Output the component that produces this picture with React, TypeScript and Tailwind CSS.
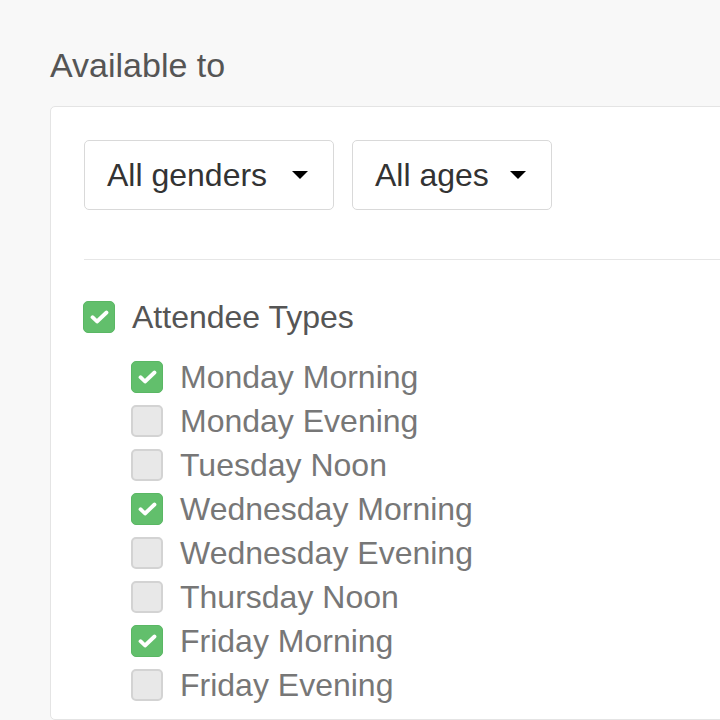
import { useState } from "react";

const slots = [
  { label: "Monday Morning", on: true },
  { label: "Monday Evening", on: false },
  { label: "Tuesday Noon", on: false },
  { label: "Wednesday Morning", on: true },
  { label: "Wednesday Evening", on: false },
  { label: "Thursday Noon", on: false },
  { label: "Friday Morning", on: true },
  { label: "Friday Evening", on: false },
];

function Box({ checked, onClick }: { checked: boolean; onClick: () => void }) {
  return (
    <button
      onClick={onClick}
      className={
        checked
          ? "w-[32px] h-[32px] shrink-0 rounded-[5px] bg-[#62bf6c] border border-[#5ab764] flex items-center justify-center"
          : "w-[32px] h-[32px] shrink-0 rounded-[5px] bg-[#e8e8e8] border-2 border-[#d3d3d3]"
      }
    >
      {checked && (
        <svg width="19" height="14" viewBox="0 0 19 14" fill="none">
          <path
            d="M2.5 7.2 L7 11.5 L16.5 2.5"
            stroke="#fff"
            strokeWidth="3.8"
            strokeLinecap="round"
            strokeLinejoin="round"
          />
        </svg>
      )}
    </button>
  );
}

function Select({ label, width }: { label: string; width: string }) {
  return (
    <div
      className={`${width} flex items-center justify-between h-[70px] pl-[22px] pr-[25px] bg-white border border-[#d9d9d9] rounded-[5px] text-[#333] text-[32px]`}
    >
      <span>{label}</span>
      <svg width="16" height="8" viewBox="0 0 16 8">
        <path d="M0 0 H16 L8 8 Z" fill="#000" />
      </svg>
    </div>
  );
}

export default function App() {
  const [all, setAll] = useState(true);
  const [checks, setChecks] = useState(slots.map(s => s.on));

  return (
    <div
      className="min-h-screen w-[720px] h-[720px] overflow-hidden bg-[#f8f8f8] pl-[50px] pt-[45px]"
      style={{ fontFamily: '"Liberation Sans", Arial, sans-serif' }}
    >
      <h2 className="text-[34px] leading-[40px] text-[#555] mb-[21px]">Available to</h2>

      {/* Card */}
      <div className="w-[720px] bg-white border border-[#e4e4e4] rounded-[5px] pt-[33px] pl-[33px] pb-[12px]">
        <div className="flex gap-[18px]">
          <Select label="All genders" width="w-[250px]" />
          <Select label="All ages" width="w-[200px]" />
        </div>

        <div className="h-px bg-[#e6e6e6] mt-[49px] mb-[35px]" />

        <div className="-ml-px">
          <div className="flex items-center h-[44px] gap-[17px]">
            <Box checked={all} onClick={() => setAll(!all)} />
            <span className="text-[32px] text-[#555]">Attendee Types</span>
          </div>

          <div className="mt-[16px] pl-[48px]">
            {slots.map((s, i) => (
              <div key={s.label} className="flex items-center h-[44px] gap-[17px]">
                <Box
                  checked={checks[i]}
                  onClick={() => setChecks(checks.map((c, j) => (j === i ? !c : c)))}
                />
                <span className="text-[32px] text-[#777]">{s.label}</span>
              </div>
            ))}
          </div>
        </div>
      </div>
    </div>
  );
}
